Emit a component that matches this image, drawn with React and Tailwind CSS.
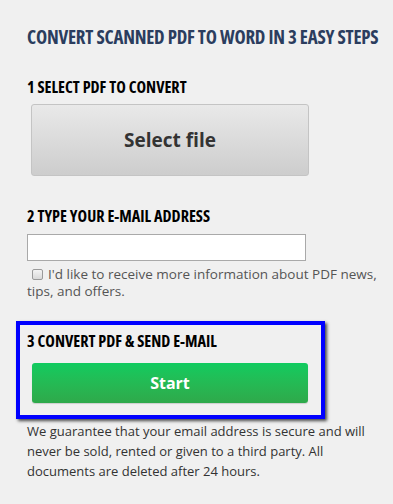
export default function App() {
  const head = "font-['Open_Sans',sans-serif] font-bold font-stretch-condensed uppercase";
  return (
    <div className="min-h-[504px] w-[393px] bg-[#f0f0f0] font-['Open_Sans',sans-serif]">
      <div className="pl-[27px] pr-3 pt-[26px]">
        <h1 className={`${head} whitespace-nowrap text-[18.9px] leading-[22px] tracking-[-0.2px] text-[#2b3d5e]`}>
          Convert scanned PDF to Word in 3 easy steps
        </h1>

        <h2 className={`${head} mt-[29px] text-[16.2px] leading-[20px] text-black`}>1 Select PDF to convert</h2>
        <button className="mt-[7px] ml-[4px] flex h-[72px] w-[278px] items-center justify-center rounded-[3px] border border-[#c4c4c4] bg-gradient-to-b from-[#e9e9e9] to-[#cdcdcd] text-[19px] font-bold text-[#333]">
          Select file
        </button>

        <h2 className={`${head} mt-[30px] text-[16.2px] leading-[20px] text-black`}>2 Type your e-mail address</h2>
        <input
          type="text"
          className="mt-[8px] block h-[27px] w-[279px] border border-[#a9a9a9] bg-white"
        />
        <p className="mt-[5px] text-[13.5px] leading-[17px] text-[#555]">
          <input
            type="checkbox"
            className="relative top-[1px] mr-[5px] ml-[5px] h-[11px] w-[11px] appearance-none rounded-[2px] border border-[#9a9a9a] bg-gradient-to-b from-[#f4f4f4] to-[#d9d9d9] align-baseline"
          />
          I'd like to receive more information about PDF news, tips, and offers.
        </p>
      </div>

      <div className="mt-[21px] ml-[16px] w-[309px] border-[4px] border-[#0000ff] pb-[12px] pl-[7px] pt-[6px] shadow-[2px_2px_3px_rgba(0,0,0,0.7)]">
        <h2 className={`${head} text-[16.2px] leading-[20px] text-black`}>3 Convert PDF &amp; Send e-mail</h2>
        <button className="mt-[12px] ml-[5px] flex h-[40px] w-[276px] items-center justify-center rounded-[3px] bg-gradient-to-b from-[#0fcb5f] to-[#2ea94a] text-[16px] font-bold text-white shadow-[0_1px_1px_rgba(0,0,0,0.15)]">
          Start
        </button>
      </div>

      <p className="mt-[2px] pl-[27px] pr-[20px] text-[13px] leading-[20px] text-[#333]">
        We guarantee that your email address is secure and will never be sold, rented or given to a third party. All documents are deleted after 24 hours.
      </p>
    </div>
  );
}
